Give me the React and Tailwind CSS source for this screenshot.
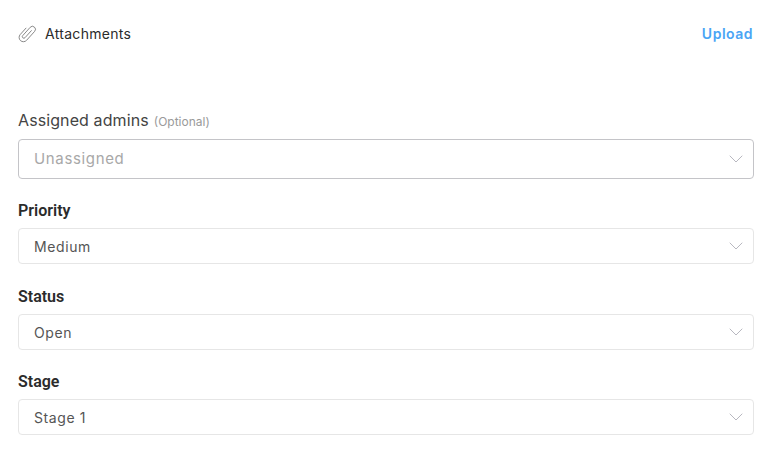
import { ChevronDown } from 'lucide-react';

const poppins = "font-['Inter',sans-serif]";

// Select-looking field with a chevron on the right
const Field = ({ value, big }) => (
  <div className={`flex items-center justify-between bg-white border rounded pl-[15px] pr-[5px] ${big ? 'h-10 border-[#c4c4c8] text-[15px] tracking-[0.65px] text-[#a8a8a8]' : 'h-9 border-[#e6e6e6] text-[14px] tracking-[0.6px] text-[#555555]'} ${poppins}`}>
    <span>{value}</span>
    <ChevronDown size={24} strokeWidth={1} className="text-[#b8b8c0]" />
  </div>
);

const Label = ({ children }) => (
  <div className="font-['Roboto',sans-serif] font-semibold text-[16px] leading-[19px] text-[#2b2b2b] mb-[8px]">{children}</div>
);

export default function App() {
  return (
    <div className="w-[778px] h-[465px] bg-white pl-[18px] pr-[24px] overflow-hidden">
      <div className="flex items-center justify-between h-[24px] mt-[21px]">
        <div className="flex items-center gap-[8px]">
          <svg width="19" height="20" viewBox="0 0 19 20" fill="none" stroke="#808080" strokeWidth="1" strokeLinecap="round" strokeLinejoin="round">
            <g transform="translate(9.5 10) rotate(42) scale(0.86)">
              <path d="M1.5 -5 V6 a1.8 1.8 0 0 1 -3.6 0 V-7 a3.5 3.5 0 0 1 7 0 V7 a5 5 0 0 1 -10 0 V-3" />
            </g>
          </svg>
          <span className={`${poppins} text-[14px] tracking-[0.3px] text-[#2b2b2b]`}>Attachments</span>
        </div>
        <span className={`${poppins} font-semibold text-[14px] tracking-[0.5px] text-[#4aa5f5] mr-[1px]`}>Upload</span>
      </div>

      <div className="mt-[65px] mb-[7px] flex items-baseline gap-[5px] leading-[20px]">
        <span className={`${poppins} text-[16px] tracking-[0.1px] text-[#444444]`}>Assigned admins</span>
        <span className={`${poppins} text-[12px] text-[#9a9a9a]`}>(Optional)</span>
      </div>
      <Field value="Unassigned" big />

      <div className="mt-[22px]"><Label>Priority</Label></div>
      <Field value="Medium" />

      <div className="mt-[23px]"><Label>Status</Label></div>
      <Field value="Open" />

      <div className="mt-[22px]"><Label>Stage</Label></div>
      <Field value="Stage 1" />
    </div>
  );
}
